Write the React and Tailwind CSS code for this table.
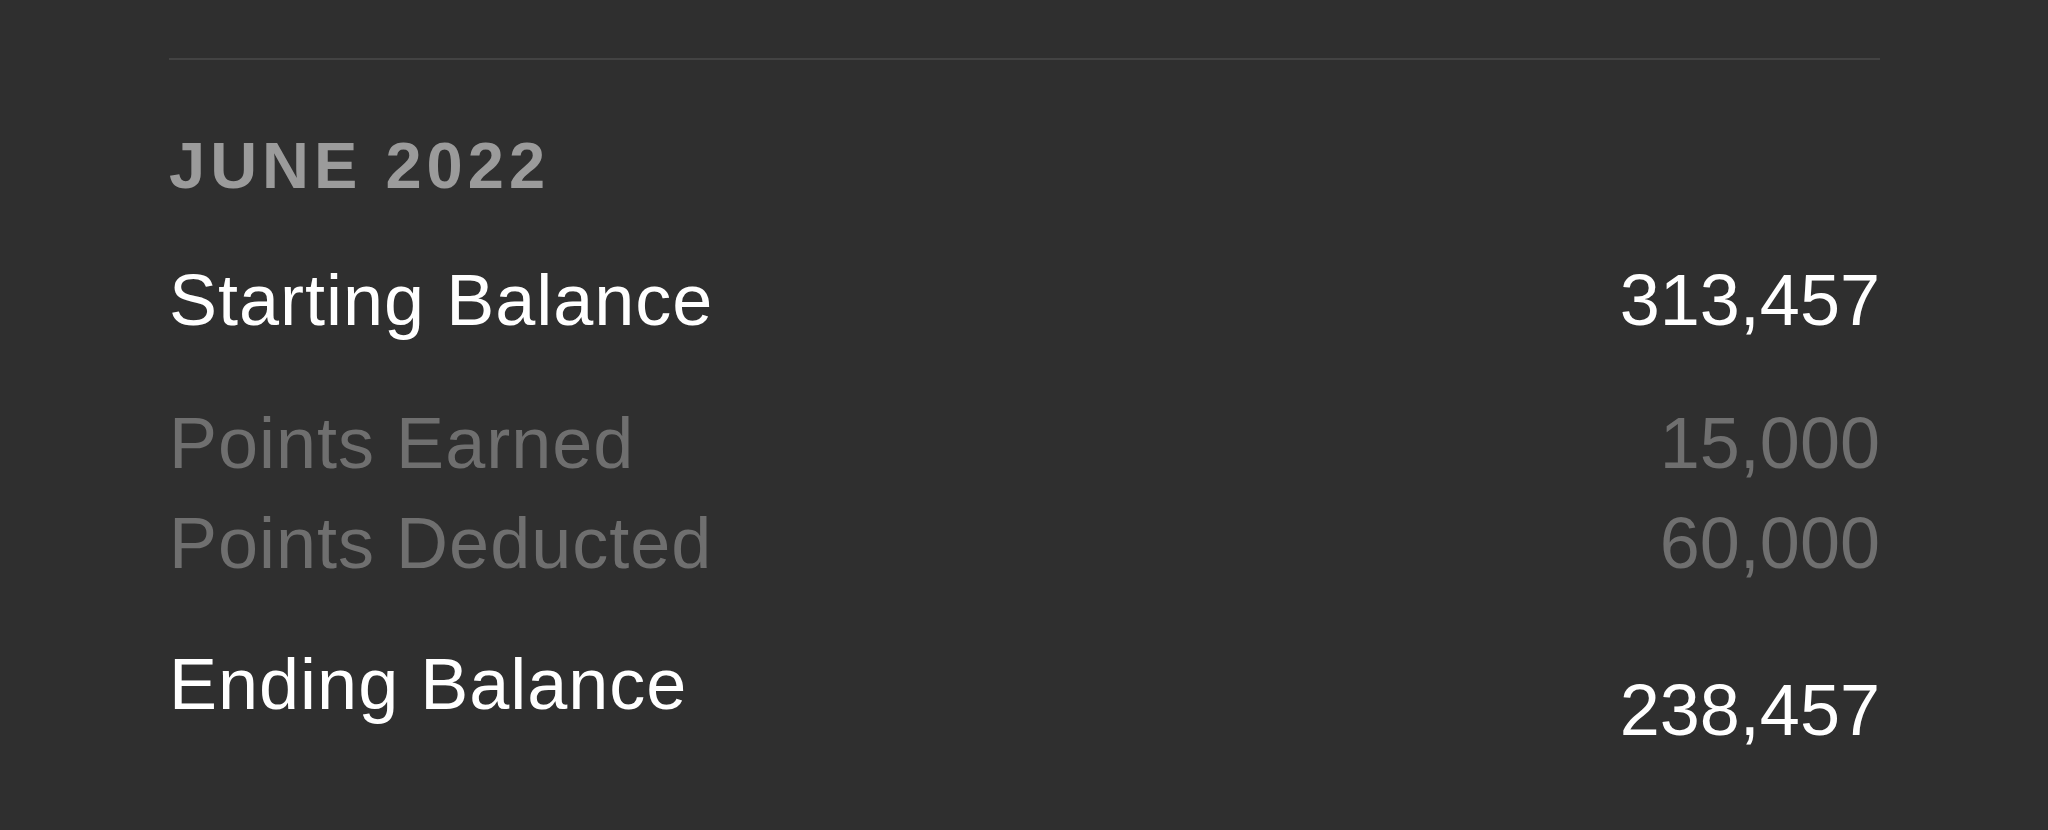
export default function App() {
  const font = { fontFamily: '"Liberation Sans", Arial, sans-serif' };
  return (
    <div
      className="w-full h-[830px] bg-[#2f2f2f] pt-[58px] pl-[169px] pr-[168px] overflow-hidden"
      style={font}
    >
      <div className="h-[2px] bg-[#434343]" />
      <div className="mt-[73px] text-[65px] leading-[65px] font-bold tracking-[5px] text-[#9b9b9b]">
        JUNE 2022
      </div>

      <div className="mt-[52px] flex justify-between h-[100px] text-[72px] leading-[100px] text-white">
        <span className="tracking-[1px]">Starting Balance</span>
        <span>313,457</span>
      </div>

      <div className="mt-[43px] flex justify-between h-[100px] text-[72px] leading-[100px] text-[#6f6f6f]">
        <span className="tracking-[1px]">Points Earned</span>
        <span>15,000</span>
      </div>
      <div className="flex justify-between h-[100px] text-[72px] leading-[100px] text-[#6f6f6f]">
        <span className="tracking-[1px]">Points Deducted</span>
        <span>60,000</span>
      </div>

      <div className="mt-[41px] flex justify-between items-start text-[72px] leading-[100px] text-white">
        <span className="tracking-[1px]">Ending Balance</span>
        <span className="mt-[26px]">238,457</span>
      </div>
    </div>
  );
}
